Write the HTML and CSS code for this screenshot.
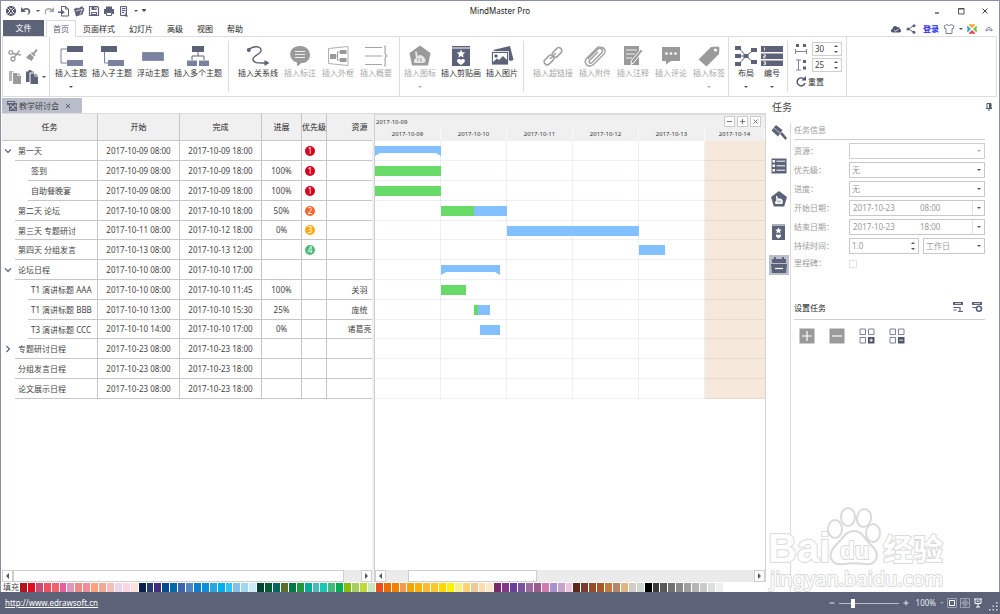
FILE: index.html
```html
<!DOCTYPE html>
<html lang="zh-CN">
<head>
<meta charset="utf-8">
<title>MindMaster Pro</title>
<link rel="stylesheet" href="styles.css">
</head>
<body>
<div class="window">
  <header class="titlebar">
    <div class="quick">
      <button class="ib" aria-label="MindMaster"><svg width="12" height="12" viewBox="0 0 12 12"><circle cx="6" cy="6" r="5" fill="#4a5068"/><path d="M2.5 3.500l2.500 2.500-2.500 2.500M9.500 3.500L7 6l2.500 2.500M4.500 2.500L6 4.500l1.500-2M4.500 9.500L6 7.500l1.500 2" fill="none" stroke="#fff" stroke-width="1"/></svg></button>
      <button class="ib" aria-label="撤销"><svg width="12" height="12" viewBox="0 0 12 12"><path d="M1 2v5h5L4.300 5.300C6 4 8.500 4.500 8.500 7c0 1-.5 2-1.500 3 2-.5 3.500-2 3.200-4C9.800 2.800 6 2 3 4z" fill="#5c6378"/></svg></button>
      <button class="tiny" aria-label="撤销列表"><i class="arr"></i></button>
      <button class="ib" aria-label="重做"><svg width="12" height="12" viewBox="0 0 12 12"><path d="M11 2v5H6l1.700-1.700C6 4 3.500 4.500 3 7c0 1 0 2 .5 3C2 9 1.300 7.500 1.800 6 2.500 3 6 2 9 4z" fill="#a5a5a5"/></svg></button>
      <button class="ib" aria-label="新建"><svg width="12" height="12" viewBox="0 0 12 12"><path d="M3.500 5V1.500h4L10.500 4v7h-7V9.500M7.500 1.500V4h3" fill="none" stroke="#5c6378"/><path d="M0 6.500h3V4.300L6.800 7.200 3 10V8H0z" fill="#5c6378"/></svg></button>
      <button class="ib" aria-label="打开"><svg width="12" height="12" viewBox="0 0 12 12"><path d="M1 4l3-1.500 1 1L9.500 1l.5 2 1.500.5-2 6L3 11.500z" fill="#5c6378"/><path d="M3 6l6.500-2L7 9.500" fill="none" stroke="#fff" stroke-width=".7"/></svg></button>
      <button class="ib" aria-label="保存"><svg width="12" height="12" viewBox="0 0 12 12"><path d="M1.500 1.500h8l1 1v8h-9z" fill="none" stroke="#5c6378" stroke-width="1.200"/><path d="M3.500 1.500h5v3.500h-5zM3 7h6v4H3z" fill="#5c6378"/><path d="M6.500 2h1v2h-1zM4 8h4v1H4z" fill="#fff"/></svg></button>
      <button class="ib" aria-label="打印"><svg width="12" height="12" viewBox="0 0 12 12"><path d="M3 1.500h6v2.500H3zM1 4h10v5H9V7H3v2H1z" fill="#5c6378"/><path d="M3.500 7.500h5v3h-5z" fill="#fff" stroke="#5c6378"/></svg></button>
      <button class="ib" aria-label="导出"><svg width="12" height="12" viewBox="0 0 12 12"><path d="M2.500 1.500h6v9h-6zM4 3.500h3.500M4 5.500h3.500M4 7.500h2" fill="#e8eaf0" stroke="#5c6378"/><path d="M7 8l3.500 3.500H7z" fill="#5c6378"/></svg></button>
      <button class="tiny" aria-label="导出列表"><i class="arr"></i></button>
      <button class="tiny" aria-label="自定义"><i class="arr more"></i></button>
    </div>
    <h1 class="app-name">MindMaster Pro</h1>
    <div class="winctl">
      <button class="ib" aria-label="最小化"><svg width="12" height="12" viewBox="0 0 12 12"><path d="M4 8h4" stroke="#333" stroke-width="1.200"/></svg></button>
      <button class="ib" aria-label="最大化"><svg width="12" height="12" viewBox="0 0 12 12"><path d="M3.500 3.500h5.500v5.500H3.500z M3.500 4h5.500" fill="none" stroke="#444" stroke-width=".9"/></svg></button>
      <button class="ib" aria-label="关闭"><svg width="12" height="12" viewBox="0 0 12 12"><path d="M3.500 3.500l5 5M8.500 3.500l-5 5" stroke="#444"/></svg></button>
    </div>
  </header>

  <nav class="menu">
    <button class="file">文件</button>
    <button class="mtab on">首页</button>
    <button class="mtab">页面样式</button>
    <button class="mtab">幻灯片</button>
    <button class="mtab">高级</button>
    <button class="mtab">视图</button>
    <button class="mtab">帮助</button>
    <div class="account">
      <button class="ib" aria-label="云"><svg width="12" height="12" viewBox="0 0 12 12"><path d="M3 9.500C.5 9.500.3 6.500 2.500 6 2.500 3.500 5.500 2 7 4c2-.5 3 .8 2.800 2 2 .5 1.500 3.500-.3 3.500z" fill="#4f566c"/><path d="M4 7l1.500 1.300L8.500 6" fill="none" stroke="#fff" stroke-width=".8"/></svg></button>
      <button class="ib" aria-label="分享"><svg width="12" height="12" viewBox="0 0 12 12"><path d="M9 2.500L3.500 6 9 9.500" fill="none" stroke="#5c6378"/><circle cx="9" cy="2.700" r="1.500" fill="#5c6378"/><circle cx="3" cy="6" r="1.500" fill="#5c6378"/><circle cx="9" cy="9.300" r="1.500" fill="#5c6378"/></svg></button>
      <a class="login" href="#login">登录</a>
      <button class="ib" aria-label="皮肤"><svg width="12" height="12" viewBox="0 0 12 12"><path d="M4 1.500c1 1.300 3 1.300 4 0l3 1.500-1 3-1-.5v5H3v-5L2 6 1 3z" fill="none" stroke="#5c6378" stroke-width=".8"/></svg></button>
      <button class="tiny" aria-label="皮肤列表"><i class="arr"></i></button>
      <button class="ib" aria-label="社区"><svg width="12" height="12" viewBox="0 0 12 12"><path d="M6 5L2.500 1.500 5 1l1 1 1-1 2.500.5z" fill="#f8a51b"/><path d="M7 6l3.500-3.500.5 2.500-1 1 1 1-.5 2.500z" fill="#7ac143"/><path d="M6 7l3.500 3.500L7 11l-1-1-1 1-2.500-.5z" fill="#ee3d48"/><path d="M5 6L1.500 9.500 1 7l1-1-1-1 .5-2.500z" fill="#25a9e0"/></svg></button>
      <button class="ib last" aria-label="收起功能区"><svg width="12" height="12" viewBox="0 0 12 12"><path d="M3 6.500L6 4l3 2.500V8L6 6.500 3 8z" fill="none" stroke="#5c6378" stroke-width=".8"/></svg></button>
    </div>
  </nav>

  <section class="ribbon">
    <div class="group clip">
      <button class="ib" aria-label="剪切"><svg width="14" height="14" viewBox="0 0 14 14"><g fill="none" stroke="#9a9a9a" stroke-width="1.300"><circle cx="2.800" cy="4.500" r="1.900"/><circle cx="5" cy="11" r="2"/><path d="M4.500 5.500L13 7M6 9.500L11.500 2.500"/></g></svg></button>
      <button class="ib" aria-label="格式刷"><svg width="14" height="14" viewBox="0 0 14 14"><path d="M11 1l1.500 1.500L9.500 6l1 1.200L9.300 8.500 5.800 5 7 4l1.200.8zM5 5.500l4 4L6.500 13 1 9.500z" fill="#9a9a9a"/></svg></button>
      <button class="ib" aria-label="复制"><svg width="14" height="14" viewBox="0 0 14 14"><path d="M1 1h5l-2 2v8H1z" fill="#b5b5b5"/><path d="M5 3h4.500v3H13v8H5z" fill="#9a9a9a"/><path d="M10.300 3L13 5.300h-2.700z" fill="#9a9a9a"/></svg></button>
      <button class="ib pst" aria-label="粘贴"><svg width="14" height="14" viewBox="0 0 14 14"><path d="M1 1.500h2L4 0h2l1 1.500h2v1H4.500V12H1z" fill="#5c6378"/><path d="M5.500 3.500h4v3H13V14H5.500z" fill="#5c6378"/><path d="M10.300 3.500L13 5.800h-2.700z" fill="#5c6378"/></svg><i class="arr"></i></button>
    </div>
    <div class="group topics short">
      <button class="tool"><svg width="24" height="22" viewBox="0 0 24 22"><path d="M8 4H2v14h6" fill="none" stroke="#7b82a0"/><path d="M8 1h16v6H8z" fill="#5c6378"/><path d="M8 15h16v6H8z" fill="#7b82a0"/></svg><span>插入主题</span><i class="arr"></i></button>
      <button class="tool"><svg width="24" height="22" viewBox="0 0 24 22"><path d="M4.500 7v11H8" fill="none" stroke="#7b82a0"/><path d="M1 1h16v6H1z" fill="#5c6378"/><path d="M8 15h16v6H8z" fill="#7b82a0"/></svg><span>插入子主题</span></button>
      <button class="tool"><svg width="24" height="22" viewBox="0 0 24 22"><path d="M1.500 7.500h21v8h-21z" fill="#7b82a0" stroke="#6a7190" stroke-width=".6"/></svg><span>浮动主题</span></button>
      <button class="tool"><svg width="24" height="22" viewBox="0 0 24 22"><path d="M12 7v4M6 15v-4h12v4" fill="none" stroke="#5c6378"/><path d="M6 1h12v6H6z" fill="#5c6378"/><path d="M1 15.500h10V21H1zM13 15.500h10V21H13z" fill="#7b82a0"/></svg><span>插入多个主题</span></button>
    </div>
    <div class="group rel">
      <button class="tool"><svg width="24" height="22" viewBox="0 0 24 22"><path d="M2.500 5C7 0 16 1 15 6c-1 4-8 4-8 8.500C7 18 12 18 20 18" fill="none" stroke="#5c6378" stroke-width="1.400"/><circle cx="2.800" cy="5" r="2" fill="#5c6378"/><path d="M18.500 15l5 3-5 3z" fill="#5c6378"/></svg><span>插入关系线</span></button>
      <button class="tool dim"><svg width="24" height="22" viewBox="0 0 24 22"><path d="M12 1c13 0 13 17 1.500 17L9 21.500V17.600C-1 15 0 1 12 1z" fill="#9a9a9a"/><path d="M7 6.500h10M7 9.500h10M7 12.500h10" stroke="#eee"/></svg><span>插入标注</span></button>
      <button class="tool dim"><svg width="24" height="22" viewBox="0 0 24 22"><path d="M2.500 3.500L22 1.500v19L2.500 18.500z" fill="none" stroke="#b0b0b0"/><path d="M9 11h2.500M14 7h-2.500v8H14" fill="none" stroke="#9a9a9a"/><path d="M4 9h6v5H4zM14 5h6.500v4H14zM14 13h6.500v4H14z" fill="#9a9a9a"/></svg><span>插入外框</span></button>
      <button class="tool dim"><svg width="24" height="22" viewBox="0 0 24 22"><path d="M1 2.500h17M1 11h17M1 19.500h17M20 1c2 0 1 2 1 7 0 2 .5 2.500 2 3-1.500.5-2 1-2 3 0 5 1 7-1 7" fill="none" stroke="#a5a5a5" stroke-width="1.200"/></svg><span>插入概要</span></button>
    </div>
    <div class="group pics short">
      <button class="tool dim"><svg width="24" height="22" viewBox="0 0 24 22"><path d="M12 .5L22.500 8 20 20.500H4L1.500 8z" fill="#9a9a9a"/><path d="M6.500 18c-1.500-3 .5-4 1.500-5l-1-6c1-1.500 2-.5 2 1l1 4c0-2 2-3 2-1.500 1.500-1 5 2 5.500 4.500.5 2-1 3-2.500 3z" fill="#e8e8e8"/><path d="M10 13v3M13 13v4" stroke="#9a9a9a"/></svg><span>插入图标</span><i class="arr"></i></button>
      <button class="tool"><svg width="24" height="22" viewBox="0 0 24 22"><path d="M3 1h18v1.500H3zM3 3.500h18V21H3z" fill="#5c6378"/><path d="M12 4.500l1.200 2.700 3 .3-2.200 2 .6 3-2.600-1.600-2.600 1.600.6-3-2.200-2 3-.3z" fill="#fff"/><path d="M12 20c-6-3.500-4-6.500-1.500-6 .8.200 1.500 1 1.500 1s.7-.8 1.500-1C16 13.500 18 16.500 12 20z" fill="#fff"/></svg><span>插入剪贴画</span></button>
      <button class="tool"><svg width="24" height="22" viewBox="0 0 24 22"><path d="M3 5L20 1l3.500 14-3 1z" fill="#5c6378"/><path d="M1.500 6.500h17v13.500h-17z" fill="#5c6378" stroke="#fff" stroke-width=".8"/><path d="M3 8h14v7l-4-4-4 4-2-1.500L3 17z" fill="#fff"/><circle cx="6" cy="11" r="1.700" fill="#5c6378"/></svg><span>插入图片</span></button>
    </div>
    <div class="group links">
      <button class="tool dim"><svg width="24" height="22" viewBox="0 0 24 22"><g fill="none" stroke="#a0a0a0" stroke-width="1.500"><rect x="10.500" y="4.500" width="11" height="6" rx="3" transform="rotate(-45 16 7.500)"/><rect x="2.500" y="12" width="11" height="6" rx="3" transform="rotate(-45 8 15)"/><path d="M9 14l6-6"/></g></svg><span>插入超链接</span></button>
      <button class="tool dim"><svg width="24" height="22" viewBox="0 0 24 22"><path d="M5 14L14.500 4.500c3-3 6.500.5 4 3.500L9 17.500c-1.800 1.800-4-.2-2.500-2L15 7M18.500 2.500c4 .5 4.500 4.500 2 7L10.500 19.500C5 23.500 0 18 3.500 13.500L14 3c1.500-1.300 3-1.500 4.500-.5" fill="none" stroke="#a0a0a0" stroke-width="1.400"/></svg><span>插入附件</span></button>
      <button class="tool dim"><svg width="24" height="22" viewBox="0 0 24 22"><path d="M3 1h15v19H3z" fill="#9a9a9a"/><path d="M5 5h11M5 9h9M5 13h6" stroke="#eee" stroke-width="1.200"/><path d="M20 4l2 1.500-9 12-3 2 .5-4z" fill="#9a9a9a" stroke="#fff"/></svg><span>插入注释</span></button>
      <button class="tool dim"><svg width="24" height="22" viewBox="0 0 24 22"><path d="M3 2h18v14H12l-5 3.500V16H3z" fill="#9a9a9a"/><circle cx="7.500" cy="8.500" r="1.300" fill="#fff"/><circle cx="12" cy="8.500" r="1.300" fill="#fff"/><circle cx="16.500" cy="8.500" r="1.300" fill="#fff"/></svg><span>插入评论</span></button>
      <button class="tool dim"><svg width="24" height="22" viewBox="0 0 24 22"><path d="M1.500 14.500L14 2l7-.5 1.500 1L22 9 9.500 21.500z" fill="#9a9a9a"/><circle cx="18.500" cy="5" r="1.600" fill="#fff"/></svg><span>插入标签</span><i class="arr"></i></button>
    </div>
    <div class="group lay short">
      <button class="tool"><svg width="22" height="22" viewBox="0 0 22 22"><path d="M4 3l7 8-7 8M4 11h7M18 5.500L11 11l7 6" fill="none" stroke="#5c6378"/><path d="M0 1h6v4H0zM0 9h6v4H0zM0 17h6v4H0zM16 3h6v4h-6zM16 15h6v4h-6zM8.500 9h5v4h-5z" fill="#5c6378"/></svg><span>布局</span><i class="arr"></i></button>
      <button class="tool"><svg width="22" height="22" viewBox="0 0 22 22"><path d="M0 1h22v6H0zM0 8.500h22v5.500H0zM0 15.500h22V21H0z" fill="#5c6378"/><path d="M3.500 2.500v3M2.500 9.800h2v1.500h-2v1.500h2M2.500 16.800h2v2.800h-2M3 18.200h1" stroke="#fff" stroke-width=".8" fill="none"/></svg><span>编号</span><i class="arr"></i></button>
    </div>
    <div class="group space">
      <label class="srow"><svg width="12" height="12" viewBox="0 0 12 12"><path d="M1 1h3v3H1zM8 1h3v3H8z" fill="#5c6378"/><path d="M.5 6v5M11.500 6v5M1 8.500h10" stroke="#7b82a0" fill="none"/></svg><span class="spin"><input type="text" value="30" aria-label="水平间距"><span class="ud"><i class="arr up"></i><i class="arr"></i></span></span></label>
      <label class="srow"><svg width="12" height="12" viewBox="0 0 12 12"><path d="M8 1h3v3H8zM8 7.500h3v3H8z" fill="#5c6378"/><path d="M1 1h5M1 11h5M3.500 1v10" stroke="#7b82a0" fill="none"/></svg><span class="spin"><input type="text" value="25" aria-label="垂直间距"><span class="ud"><i class="arr up"></i><i class="arr"></i></span></span></label>
      <button class="reset"><svg width="12" height="12" viewBox="0 0 12 12"><path d="M9 3a4 4 0 1 0 1 4" fill="none" stroke="#4f566c" stroke-width="1.400"/><path d="M6.500 4.500H11V0z" fill="#4f566c"/></svg><span>重置</span></button>
    </div>
  </section>

  <main class="main">
    <section class="workspace">
      <div class="docs">
        <div class="doc"><svg width="12" height="12" viewBox="0 0 12 12"><path d="M1 1h8v2h2v8H3V5H1z" fill="#5c6378"/><path d="M2 2.500h6M4.500 4.500L9.500 10M9.500 4.500L4.500 10M4 6h1M9 6h1.500" stroke="#dfe2ea" stroke-width=".8"/></svg><span>教学研讨会</span><button class="x" aria-label="关闭"><svg width="6" height="6" viewBox="0 0 6 6"><path d="M.8.800l4.400 4.400M5.200.8L.8 5.200" stroke="#555" stroke-width=".9"/></svg></button></div>
      </div>
      <div class="split">
        <div class="task-pane">
          <div class="table-box">
          <table class="tasks">
            <colgroup><col class="c-name"><col class="c-date"><col class="c-date"><col class="c-prog"><col class="c-prio"><col class="c-res"></colgroup>
            <thead><tr><th>任务</th><th>开始</th><th>完成</th><th>进展</th><th>优先级</th><th>资源</th></tr></thead>
            <tbody>
              <tr><td class="n0"><button class="chev" aria-label="折叠"><svg width="8" height="8" viewBox="0 0 8 8"><path d="M1 2.500l3 3 3-3" fill="none" stroke="#5c6378" stroke-width="1.200"/></svg></button>第一天</td><td>2017-10-09 08:00</td><td>2017-10-09 18:00</td><td></td><td><b class="p p1">1</b></td><td></td></tr>
              <tr><td class="n1">签到</td><td>2017-10-09 08:00</td><td>2017-10-09 18:00</td><td>100%</td><td><b class="p p1">1</b></td><td></td></tr>
              <tr><td class="n1">自助餐晚宴</td><td>2017-10-09 08:00</td><td>2017-10-09 18:00</td><td>100%</td><td><b class="p p1">1</b></td><td></td></tr>
              <tr><td class="n0">第二天 论坛</td><td>2017-10-10 08:00</td><td>2017-10-10 18:00</td><td>50%</td><td><b class="p p2">2</b></td><td></td></tr>
              <tr><td class="n0">第三天 专题研讨</td><td>2017-10-11 08:00</td><td>2017-10-12 18:00</td><td>0%</td><td><b class="p p3">3</b></td><td></td></tr>
              <tr><td class="n0">第四天 分组发言</td><td>2017-10-13 08:00</td><td>2017-10-13 12:00</td><td></td><td><b class="p p4">4</b></td><td></td></tr>
              <tr><td class="n0"><button class="chev" aria-label="折叠"><svg width="8" height="8" viewBox="0 0 8 8"><path d="M1 2.500l3 3 3-3" fill="none" stroke="#5c6378" stroke-width="1.200"/></svg></button>论坛日程</td><td>2017-10-10 08:00</td><td>2017-10-10 17:00</td><td></td><td></td><td></td></tr>
              <tr><td class="n1">T1 演讲标题 AAA</td><td>2017-10-10 08:00</td><td>2017-10-10 11:45</td><td>100%</td><td></td><td>关羽</td></tr>
              <tr><td class="n1">T1 演讲标题 BBB</td><td>2017-10-10 13:00</td><td>2017-10-10 15:30</td><td>25%</td><td></td><td>庞统</td></tr>
              <tr><td class="n1">T3 演讲标题 CCC</td><td>2017-10-10 14:00</td><td>2017-10-10 17:00</td><td>0%</td><td></td><td>诸葛亮</td></tr>
              <tr><td class="n0"><button class="chev" aria-label="展开"><svg width="8" height="8" viewBox="0 0 8 8"><path d="M2.500 1l3 3-3 3" fill="none" stroke="#5c6378" stroke-width="1.200"/></svg></button>专题研讨日程</td><td>2017-10-23 08:00</td><td>2017-10-23 18:00</td><td></td><td></td><td></td></tr>
              <tr><td class="n0">分组发言日程</td><td>2017-10-23 08:00</td><td>2017-10-23 18:00</td><td></td><td></td><td></td></tr>
              <tr><td class="n0">论文展示日程</td><td>2017-10-23 08:00</td><td>2017-10-23 18:00</td><td></td><td></td><td></td></tr>
            </tbody>
          </table>
          </div>
          <div class="hscroll"><button aria-label="向左"><i class="tri l"></i></button><div class="track"><div class="thumb wide"></div></div><button aria-label="向右"><i class="tri r"></i></button></div>
        </div>
        <div class="splitter"></div>
        <div class="gantt">
          <div class="g-top"><span>2017-10-09</span><div class="g-btns"><button aria-label="缩小"><svg width="9" height="9" viewBox="0 0 9 9"><path d="M2 4.500h5" stroke="#777"/></svg></button><button aria-label="放大"><svg width="9" height="9" viewBox="0 0 9 9"><path d="M2 4.500h5M4.500 2v5" stroke="#777"/></svg></button><button aria-label="关闭"><svg width="9" height="9" viewBox="0 0 9 9"><path d="M2.500 2.500l4 4M6.500 2.500l-4 4" stroke="#777"/></svg></button></div></div>
          <div class="g-days"><span>2017-10-09</span><span>2017-10-10</span><span>2017-10-11</span><span>2017-10-12</span><span>2017-10-13</span><span>2017-10-14</span></div>
          <div class="g-rows">
            <div class="g-row"><div class="bar sum" style="--x:0px;--w:66px"></div></div>
            <div class="g-row"><div class="bar" style="--x:0px;--w:66px;--done:100%"></div></div>
            <div class="g-row"><div class="bar" style="--x:0px;--w:66px;--done:100%"></div></div>
            <div class="g-row"><div class="bar" style="--x:66px;--w:66px;--done:50%"></div></div>
            <div class="g-row"><div class="bar" style="--x:132px;--w:132px"></div></div>
            <div class="g-row"><div class="bar" style="--x:264px;--w:26px"></div></div>
            <div class="g-row"><div class="bar sum" style="--x:66px;--w:59px"></div></div>
            <div class="g-row"><div class="bar" style="--x:66px;--w:25px;--done:100%"></div></div>
            <div class="g-row"><div class="bar" style="--x:99px;--w:16px;--done:25%"></div></div>
            <div class="g-row"><div class="bar" style="--x:105px;--w:20px"></div></div>
            <div class="g-row"></div>
            <div class="g-row"></div>
            <div class="g-row"></div>
          </div>
          <div class="g-fill"></div>
          <div class="hscroll"><button aria-label="向左"><i class="tri l"></i></button><div class="track"><div class="thumb part"></div></div><button aria-label="向右"><i class="tri r"></i></button></div>
        </div>
      </div>
      <div class="palette"><span class="fill-label">填充</span><div class="swatches" id="swatches"></div></div>
    </section>

    <aside class="side">
      <div class="side-head"><h2>任务</h2><button class="ib" aria-label="固定"><svg width="8" height="8" viewBox="0 0 8 8"><path d="M2 .5h4v5H2zM1 5.500h6M4 5.500V8" fill="none" stroke="#4f566c"/><path d="M4 0h2v5H4z" fill="#4f566c"/></svg></button></div>
      <div class="side-body">
        <div class="rail">
          <button aria-label="样式"><svg width="16" height="16" viewBox="0 0 16 16"><path d="M5 0l6.500 5-4.500 6.500L.5 5.500z" fill="#5c6378"/><path d="M3 3l6.500 5.500" stroke="#fff" stroke-width=".6"/><path d="M9 9l2-2 5 6-1.500 2z" fill="#5c6378"/></svg></button>
          <button aria-label="大纲"><svg width="16" height="16" viewBox="0 0 16 16"><path d="M.5.500h15v15H.5z" fill="#5c6378"/><path d="M1.500 2h2.500v2.500H1.500zM1.500 6.500h2.500V9H1.500zM1.500 11h2.500v2.500H1.500z" fill="#fff"/><path d="M5.500 3.200H14M5.500 7.800H14M5.500 12.200H14" stroke="#fff"/></svg></button>
          <button aria-label="图标"><svg width="16" height="16" viewBox="0 0 16 16"><path d="M8 0l8 6-2.800 9.500H2.800L0 6z" fill="#5c6378"/><path d="M4.500 13c-1-2 0-3 1-3.500l-.5-4c.8-1 1.500-.3 1.500.5l.7 2.500c0-1.200 1.300-1.700 1.300-.8 1.500-.6 3 1 3.300 2.500.2 1.500-.3 2.800-1.300 2.800z" fill="#fff"/><path d="M7 9.500v2M9 9.500v2" stroke="#5c6378" stroke-width=".8"/></svg></button>
          <button aria-label="剪贴画"><svg width="16" height="16" viewBox="0 0 16 16"><path d="M1 0h13v2H1z" fill="#aab0c0"/><path d="M1 2h13v14H1z" fill="#5c6378"/><path d="M7.500 3.500l1 2 2.200.2L9 7.200l.5 2.200-2-1.200-2 1.200.5-2.200-1.700-1.500 2.200-.2z" fill="#fff"/><path d="M7.500 14.500c-4-2.300-2.500-4.500-1-4 .5.200 1 .7 1 .7s.5-.5 1-.7c1.500-.5 3 1.700-1 4z" fill="#fff"/></svg></button>
          <button class="on" aria-label="任务"><svg width="16" height="16" viewBox="0 0 16 16"><path d="M1 2h2V0h2v2h6V0h2v2h2v4H1zM0 7h16l-1 9H1z" fill="#5c6378"/><path d="M4 11.500h8" stroke="#fff" stroke-width="1.200"/></svg></button>
        </div>
        <div class="props">
          <h3 class="sec">任务信息</h3>
          <div class="form">
            <label for="res">资源：</label><select id="res" class="soft" disabled><option></option></select>
            <label for="pri">优先级：</label><select id="pri" disabled><option>无</option></select>
            <label for="prg">进度：</label><select id="prg" disabled><option>无</option></select>
            <label for="sd">开始日期：</label><div class="date"><input id="sd" value="2017-10-23" disabled><input class="time" value="08:00" aria-label="开始时间" disabled><button aria-label="选择"><i class="arr"></i></button></div>
            <label for="ed">结束日期：</label><div class="date"><input id="ed" value="2017-10-23" disabled><input class="time" value="18:00" aria-label="结束时间" disabled><button aria-label="选择"><i class="arr"></i></button></div>
            <label for="du">持续时间：</label><div class="dur"><span class="spin"><input id="du" value="1.0" disabled><span class="ud"><i class="arr up"></i><i class="arr"></i></span></span><select aria-label="单位" disabled><option>工作日</option></select></div>
            <label for="ms">里程碑：</label><input id="ms" type="checkbox" disabled>
          </div>
          <div class="sec set"><h3>设置任务</h3><div class="set-btns">
            <button class="ib" aria-label="任务格式"><svg width="12" height="12" viewBox="0 0 12 12"><path d="M1 1h10v3H1z" fill="#5c6378"/><path d="M3 2.500h6" stroke="#fff" stroke-width=".7"/><path d="M1.500 6.500H8V10M6 10.500h5M1.500 9h3" fill="none" stroke="#5c6378" stroke-width="1.200"/></svg></button>
            <button class="ib" aria-label="任务设置"><svg width="12" height="12" viewBox="0 0 12 12"><path d="M1 1h10v3H1z" fill="#5c6378"/><path d="M3 2.500h6" stroke="#fff" stroke-width=".7"/><path d="M1.500 6.500H5" stroke="#5c6378"/><circle cx="8" cy="7.800" r="2.500" fill="#fff" stroke="#5c6378" stroke-width="1.600"/></svg></button></div></div>
          <div class="ops">
            <button class="ib" aria-label="添加"><svg width="16" height="16" viewBox="0 0 16 16"><path d="M.5.500h15v15H.5z" fill="#9a9a9a"/><path d="M3 8h10M8 3v10" stroke="#fff" stroke-width="1.200"/></svg></button>
            <button class="ib" aria-label="删除"><svg width="16" height="16" viewBox="0 0 16 16"><path d="M.5.500h15v15H.5z" fill="#9a9a9a"/><path d="M3 8h10" stroke="#fff" stroke-width="1.200"/></svg></button>
            <button class="ib" aria-label="展开全部"><svg width="16" height="16" viewBox="0 0 16 16"><path d="M1 1h5.500v5.500H1zM9.500 1H15v5.500H9.500zM1 9.500h5.500V15H1z" fill="#fff" stroke="#7b82a0"/><path d="M9 9h6.500v6.500H9z" fill="#4f566c"/><path d="M10.500 12.200h3.500M12.200 10.500V14" stroke="#fff" stroke-width=".9"/></svg></button>
            <button class="ib" aria-label="收起全部"><svg width="16" height="16" viewBox="0 0 16 16"><path d="M1 1h5.500v5.500H1zM9.500 1H15v5.500H9.500zM1 9.500h5.500V15H1z" fill="#fff" stroke="#7b82a0"/><path d="M9 9h6.500v6.500H9z" fill="#4f566c"/><path d="M10.500 12.200h3.500" stroke="#fff" stroke-width=".9"/></svg></button>
          </div>
        </div>
      </div>
    </aside>
    <svg class="mark" width="184" height="90" viewBox="0 0 184 90">
      <g fill="#fff" stroke="#dadada" stroke-width="2">
        <text class="m-lat" x="1" y="57">Bai</text>
        <ellipse cx="68" cy="24" rx="7" ry="9"/><ellipse cx="81" cy="12" rx="7" ry="9"/><ellipse cx="97" cy="13" rx="7" ry="9" transform="rotate(10 97 13)"/><ellipse cx="106" cy="28" rx="7" ry="9"/>
        <path d="M87 26c9 0 11 9 17 14 11 10 5 21-7 19-7-1-13-1-20 0-13 2-18-9-8-19 6-5 9-14 18-14z"/>
        <text class="m-du" x="73" y="54">du</text>
        <text class="m-cjk" x="116" y="55">经验</text>
        <text class="m-url" x="3" y="81">jingyan.baidu.com</text>
      </g>
    </svg>
  </main>

  <footer class="status">
    <a href="#home">http://www.edrawsoft.cn</a>
    <div class="zoom">
      <button class="ib" aria-label="缩小"><svg width="8" height="8" viewBox="0 0 8 8"><path d="M1.500 4h5" stroke="#e6e8ee"/></svg></button>
      <input type="range" min="0" max="100" value="22" aria-label="缩放">
      <button class="ib" aria-label="放大"><svg width="8" height="8" viewBox="0 0 8 8"><path d="M1.500 4h5M4 1.500v5" stroke="#e6e8ee"/></svg></button>
      <span class="pct">100%</span><i class="arr pale"></i>
      <button class="ib" aria-label="适合页面"><svg width="10" height="10" viewBox="0 0 10 10"><path d="M.5.500h9v9h-9z" fill="none" stroke="#9da3b4"/><path d="M2.500 2.500h5v5h-5z" fill="none" stroke="#fff"/></svg></button>
      <button class="ib" aria-label="适合宽度"><svg width="10" height="10" viewBox="0 0 10 10"><path d="M.5.500h9v9h-9zM5 0v10M0 5h10M3 3h4v4H3z" fill="none" stroke="#9da3b4"/></svg></button>
      <button class="ib" aria-label="演示"><svg width="10" height="10" viewBox="0 0 10 10"><path d="M1 1h8M2 1v4.500h6V1M5 5.500V9M3 9h4" fill="none" stroke="#fff"/><path d="M3.500 3.200h3" stroke="#fff"/></svg></button>
      <svg class="grip" width="10" height="10" viewBox="0 0 10 10"><path d="M7 0h1.500v1.500H7zM7 3.500h1.500V5H7zM7 7h1.500v1.500H7zM3.500 3.500H5V5H3.500zM3.500 7H5v1.500H3.500zM0 7h1.500v1.500H0z" fill="#d5d8e0"/></svg>
    </div>
  </footer>
</div>
<script src="app.js"></script>
</body>
</html>
```

FILE: styles.css
```css
* { box-sizing: border-box; }
body {
  margin: 0;
  font: 8px/12px "Noto Sans", "Noto Sans CJK SC", sans-serif;
  color: #444;
  background: #fff;
}
button, input, select { font: inherit; color: inherit; margin: 0; padding: 0; border: 0; background: none; border-radius: 0; }
h1, h2, h3 { margin: 0; font-weight: 400; font-size: inherit; }
svg { display: block; flex: none; }

.window {
  display: flex; flex-direction: column;
  height: 100vh;
  border: 1px solid #8b8fa2; border-bottom: 0;
}
.ib { display: flex; flex: none; align-items: center; }
.arr { display: block; flex: none; width: 0; height: 0; border: 2px solid transparent; border-top-color: #555; border-bottom: 0; }
.arr.up { border: 2px solid transparent; border-bottom-color: #555; border-top: 0; }

/* title bar */
.titlebar { display: grid; grid-template-columns: 1fr auto 1fr; align-items: center; height: 19px; padding: 0 4px; }
.quick { display: flex; align-items: center; gap: 3px; }
.tiny { display: flex; width: 5px; justify-content: center; }
.arr.more::before { content: ""; display: block; width: 4px; height: 1px; margin: -3px 0 0 -2px; background: #555; }
.app-name { color: #222; }
.winctl { display: flex; justify-content: flex-end; gap: 12px; padding-right: 4px; }

/* menu */
.menu { display: flex; align-items: stretch; height: 17px; padding-left: 2px; margin-bottom: -1px; z-index: 1; }
.file { width: 41px; margin: 0 2px 1px 0; background: #5c6378; color: #fff; }
.mtab { padding: 0 7px; color: #222; }
.mtab.on { padding: 0 6px; border: 1px solid #dcdcdc; border-bottom: 0; background: #fff; color: #5c6378; }
.account { display: flex; align-items: center; gap: 3px; margin-left: auto; padding-right: 4px; }
.login { color: #2a2aff; font-weight: 700; text-decoration: none; margin: 0 1px 0 3px; }
.account .last { margin-left: 2px; }

/* ribbon */
.ribbon { display: flex; height: 61px; margin: 0 2px 0 1px; border: 1px solid #dcdcdc; flex: none; }
.group { display: flex; position: relative; padding-top: 8px; border-right: 1px solid #dcdcdc; gap: 6px; }
.group.short { border-right-color: transparent; }
.group.short::after { content: ""; position: absolute; right: -1px; top: 4px; bottom: 4px; width: 1px; background: #dcdcdc; }
.clip { display: grid; grid-template-columns: 14px 20px; align-content: start; gap: 8px 3px; padding: 11px 4px 0 5px; }
.pst { gap: 3px; }
.topics { gap: 5px; padding-left: 5px; padding-right: 6px; }
.rel { padding-left: 9px; padding-right: 7px; }
.pics { gap: 5px; padding-left: 4px; padding-right: 5px; }
.links { padding-left: 9px; padding-right: 3px; }
.lay { gap: 4px; padding-left: 6px; padding-right: 4px; }
.tool { display: flex; flex-direction: column; align-items: center; min-width: 22px; color: #333; }
.tool span { white-space: nowrap; }
.tool .arr { margin-top: 7px; }
.tool.dim { color: #a8a8a8; }
.dim .arr { border-top-color: #b0b0b0; }
.space { flex-direction: column; gap: 2px; padding: 5px 4px 0 7px; }
.srow { display: flex; align-items: center; gap: 5px; }
.spin { display: flex; align-items: center; border: 1px solid #cfcfcf; background: #fff; height: 14px; width: 30px; }
.spin input { flex: 1; min-width: 0; padding-left: 2px; height: 12px; }
.ud { display: flex; flex-direction: column; gap: 4px; padding-right: 3px; }
.reset { display: flex; align-items: center; gap: 1px; padding-top: 2px; align-self: flex-start; color: #333; }

/* work area */
.main { display: flex; flex: 1; min-height: 0; position: relative; }
.workspace { display: flex; flex-direction: column; flex: 1; min-width: 0; padding-left: 1px; }
.docs { height: 17px; padding-top: 1px; border-bottom: 1px solid #dcdcdc; flex: none; }
.doc { display: flex; align-items: center; width: 80px; height: 15px; padding-left: 4px; gap: 1px; background: #babecb; color: #444; }
.doc .x { margin-left: 5px; }
.split { display: flex; flex: 1; min-height: 0; border-right: 1px solid #d4d4d4; }
.task-pane { display: flex; flex-direction: column; flex: 0 0 370px; min-width: 0; }
.table-box { flex: 1; overflow: hidden; }
.tasks { table-layout: fixed; width: 391px; border-spacing: 0; }
.c-name { width: 96px; }
.c-date { width: 82px; }
.c-prog { width: 40px; }
.c-prio { width: 25px; }
.c-res { width: 66px; }
.tasks th, .tasks td { padding: 0; text-align: center; white-space: nowrap; border-right: 1px solid #c6c6c6; border-bottom: 1px solid #c6c6c6; }
.tasks th { height: 27px; background: #f0f0f0; font-weight: 400; color: #222; }
.tasks tbody tr { height: 20px; }
.tasks tbody tr:nth-child(5n) { height: 19px; }
.tasks td.n0, .tasks td.n1 { text-align: left; border-bottom: 0; background: linear-gradient(#c6c6c6, #c6c6c6) no-repeat 13px 100% / 100% 1px; padding-left: 16px; }
.tasks td.n1 { background-position: 26px 100%; padding-left: 29px; }
.chev { float: left; margin: 2px 0 0 -14px; }
.p { display: block; width: 10px; height: 10px; margin: 0 0 0 3px; border-radius: 50%; color: #fff; font-size: 8px; line-height: 10px; font-weight: 400; }
.p1 { background: #d9001b; }
.p2 { background: #f7662a; }
.p3 { background: #fbac15; }
.p4 { background: #4fb97c; }
.splitter { flex: 0 0 3px; background: #f0f0f0; border-right: 1px solid #cfcfcf; }

/* timeline */
.gantt { display: flex; flex-direction: column; flex: 1; min-width: 0; font-size: 6px; color: #333; }
.g-top { display: flex; justify-content: space-between; align-items: center; height: 14px; background: #f0f0f0; padding: 0 4px 0 1px; border-top: 1px solid #dcdcdc; }
.g-btns { display: flex; gap: 2px; }
.g-btns button { display: flex; width: 11px; height: 11px; border: 1px solid #ccc; background: #fff; }
.g-days { display: grid; grid-template-columns: repeat(5, 66px) 1fr; height: 13px; background: #f0f0f0; }
.g-days span { text-align: center; border-right: 1px solid #fafafa; }
.g-rows {
  background:
    linear-gradient(#f6e9dc, #f6e9dc) no-repeat 330px 0 / 100% 100%,
    repeating-linear-gradient(to right, transparent 0 65px, #eef1f2 65px 66px);
}
.g-row { height: 20px; padding-top: 5px; border-bottom: 1px solid rgba(0, 50, 60, .07); }
.g-row:nth-child(5n) { height: 19px; }
.bar { width: var(--w); height: 10px; margin-left: var(--x); background: linear-gradient(#67da67, #67da67) no-repeat 0 0 / var(--done, 0%) 100% #82c0ff; }
.bar.sum { clip-path: polygon(0 0, 100% 0, 100% 100%, calc(100% - 5px) 7px, 5px 7px, 0 100%); }
.g-fill { flex: 1; }

.hscroll { display: flex; height: 12px; flex: none; background: #ebebeb; }
.hscroll button { display: flex; align-items: center; justify-content: center; width: 11px; border: 1px solid #cfcfcf; background: #fff; }
.track { flex: 1; display: flex; }
.thumb { border: 1px solid #cfcfcf; background: #fff; }
.thumb.wide { width: 95%; }
.thumb.part { width: 35%; margin-left: 6%; }
.tri { border: 3px solid transparent; }
.tri.l { border-right-color: #555; border-left: 0; }
.tri.r { border-left-color: #555; border-right: 0; }

.palette { display: flex; align-items: center; height: 10px; line-height: 10px; gap: 1px; padding-left: 1px; flex: none; }
.swatches { display: flex; gap: 1px; flex: 0 1 703px; height: 9px; }
.swatches button { flex: 1; min-width: 0; }

/* side panel */
.side { display: flex; flex-direction: column; flex: 0 0 233px; min-width: 0; padding-right: 14px; color: #9a9a9a; }
.side-head { display: flex; justify-content: space-between; align-items: center; height: 20px; margin: 0 -8px 6px 0; padding-left: 6px; color: #444; }
.side-head h2 { font-size: 10px; }
.side-body { display: flex; flex: 1; }
.rail { display: flex; flex-direction: column; gap: 13px; flex: 0 0 25px; padding-left: 3px; border-right: 1px solid #dcdcdc; }
.rail button { display: flex; align-items: center; justify-content: center; width: 20px; height: 20px; }
.rail .on { background: #babecb; }
.props { flex: 1; min-width: 0; padding-left: 3px; }
.sec { height: 17px; line-height: 14px; border-bottom: 1px solid #cfcfcf; }
.form { display: grid; grid-template-columns: 55px minmax(0, 1fr); gap: 3px 0; align-items: center; padding-top: 3px; }
.form select, .date, .dur .spin { height: 16px; border: 1px solid #c8c8c8; background-color: #fff; }
.form select {
  appearance: none; width: 100%; padding-left: 2px; color: #9a9a9a; opacity: 1;
  background: url("data:image/svg+xml,%3Csvg xmlns='http://www.w3.org/2000/svg' width='4' height='2'%3E%3Cpath d='M0 0h4L2 2z' fill='%23555'/%3E%3C/svg%3E") no-repeat right 3px center #fff;
}
.form select.soft { border-color: #cfcfcf; background-image: url("data:image/svg+xml,%3Csvg xmlns='http://www.w3.org/2000/svg' width='4' height='2'%3E%3Cpath d='M0 0h4L2 2z' fill='%23aaa'/%3E%3C/svg%3E"); }
.date { display: flex; }
.date input { flex: 0 0 67px; min-width: 0; padding-left: 3px; }
.date .time { flex: 1; border-right: 1px solid #e2e2e2; }
.date button { display: flex; align-items: center; justify-content: center; width: 11px; }
.dur { display: grid; grid-template-columns: 70px minmax(0, 1fr); gap: 4px; }
.dur .spin { width: 100%; }
.form input[type="checkbox"] { appearance: none; width: 8px; height: 8px; border: 1px solid #e2e2e2; }
.form label[for="ms"] { height: 14px; }
.set { display: flex; justify-content: space-between; margin-top: 30px; height: 19px; color: #222; }
.set-btns { display: flex; gap: 7px; padding-right: 2px; align-items: flex-start; }
.ops { display: flex; gap: 14px; padding: 8px 0 0 5px; }

/* watermark */
.mark { position: absolute; left: 766px; top: 408px; pointer-events: none; }
.mark text { paint-order: stroke; stroke-linejoin: round; }
.m-lat { font: 700 40px "Liberation Sans", sans-serif; }
.m-du { font: 700 24px "Liberation Sans", sans-serif; }
.m-cjk { font: 700 30px "Noto Sans CJK SC", sans-serif; }
.m-url { font: 400 20px "Noto Sans", sans-serif; }

/* status bar */
.status { display: flex; justify-content: space-between; align-items: center; height: 22px; flex: none; padding-left: 5px; background: #5c6378; color: #e6e8ee; margin: 0 -1px; }
.status a { color: #fff; }
.zoom { display: flex; align-items: center; align-self: stretch; gap: 3px; }
.zoom input { appearance: none; width: 60px; height: 10px; margin: 0; background: linear-gradient(#b9bdc9, #b9bdc9) no-repeat 0 50% / 100% 1px; }
.zoom input::-webkit-slider-thumb { appearance: none; width: 4px; height: 9px; background: #fff; }
.pct { margin: 0 1px 0 3px; }
.pale { border-top-color: #9da3b4; }
.grip { align-self: flex-end; margin: 0 1px 2px 3px; }
```

FILE: app.js
```javascript
const colors = (
  'b5121b e30b20 c84b72 ef4f63 f0636b ea5c9c e496b8 f08a86 f48b96 ffa07a f2a993 f8bdba ead6e8 ffd3e4 ffdfe0 ' +
  '0b1f4d 233a73 3f2e7e 054a91 0268a7 3f62ad 5182c2 0a7fd2 0b90d8 26a5df 00aeef 2fc3f5 84bfe8 9fd9f1 cdebf5 ' +
  '00452f 015a30 01695c 5a6f2c 007a43 1e9838 04ab99 4ab9bb 16c9b1 45b97c 00ad50 86bc0b a5cf60 c1d93a cce6c0 ' +
  'e94e1b ef6c00 f08200 f49852 f4a300 ffb100 fdb92f f9c62d ffd800 fff000 f9ef82 ffd271 eacb98 ffdcab fce8cd ' +
  '7a2a6c 83388a 683f99 78529b 9a6a9f 9c5a8c d07bb0 a990cf c5a3c8 efc3db ' +
  '5c261a 7a3b2c 944c28 ab5424 c07a3c b48568 dfb785 d3ccc6 ccd8cd ' +
  '000000 3d3a39 595757 727171 898989 9fa0a0 b5b5b6 c9caca dcdddd efefef'
).split(' ');
const box = document.getElementById('swatches');
for (const c of colors) {
  const b = document.createElement('button');
  b.style.background = '#' + c;
  b.setAttribute('aria-label', '#' + c);
  box.append(b);
}
```
